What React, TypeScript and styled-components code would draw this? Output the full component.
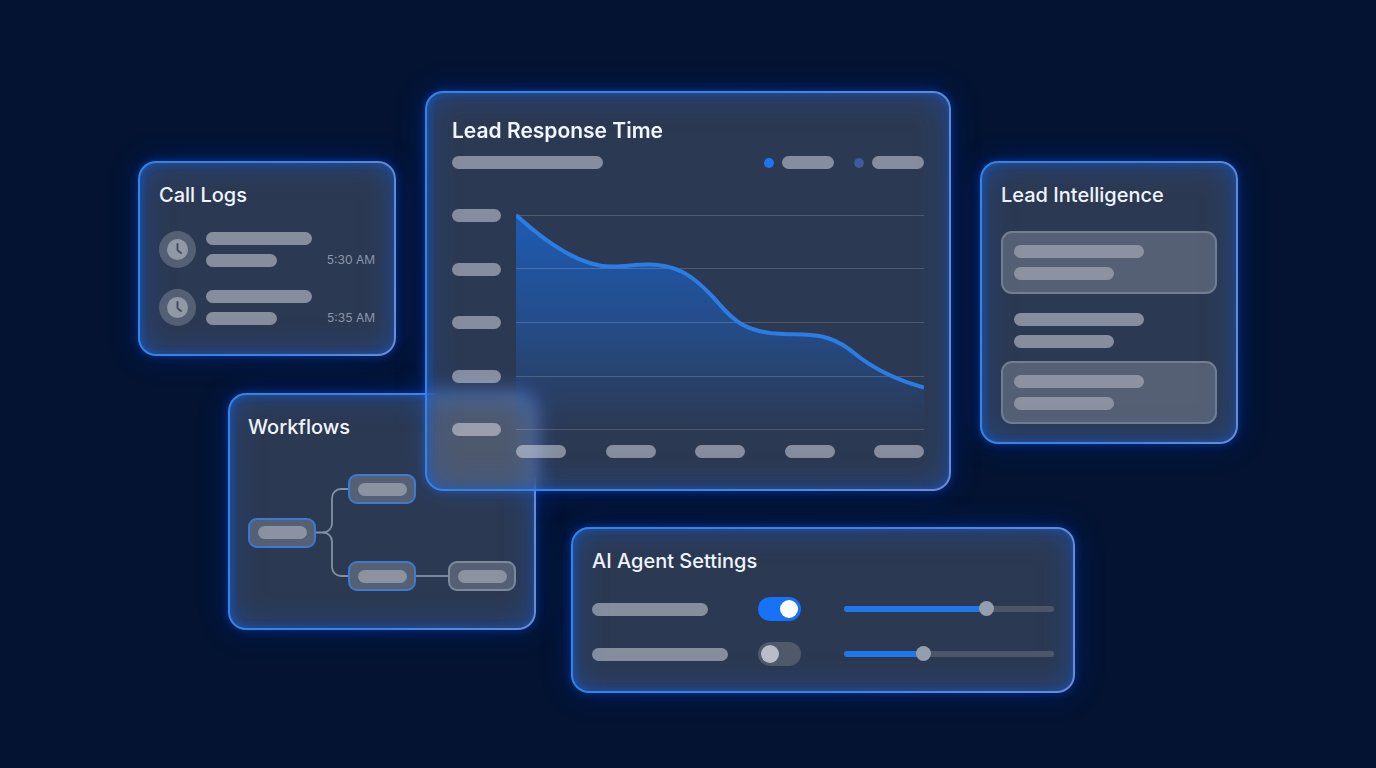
import React from 'react';
import styled, { createGlobalStyle, css } from 'styled-components';

const GlobalStyle = createGlobalStyle`
  *, *::before, *::after { box-sizing: border-box; }
  body {
    margin: 0;
    background: #031331;
    color: #f1f6ff;
    font-family: Inter, "Liberation Sans", sans-serif;
  }
`;

const Page = styled.main`
  min-height: 100vh;
  display: flex;
  align-items: center;
  justify-content: center;
  padding: 16px 24px 0;
  background: #031331;
`;

const Stage = styled.div`
  isolation: isolate;
  width: 100%;
  max-width: 1100px;
  display: grid;
  grid-template-columns: 258fr 526fr 258fr;
  column-gap: 29px;
  align-items: start;
`;

const Column = styled.div<{ $drop?: boolean; $gap: number }>`
  display: flex;
  flex-direction: column;
  gap: ${(p) => p.$gap}px;
  padding-top: ${(p) => (p.$drop ? 70 : 0)}px;
`;

const outerGlow = css`
  box-shadow:
    0 0 8px rgba(0, 84, 240, 0.45),
    0 0 30px rgba(0, 60, 200, 0.3);
`;

const Card = styled.section<{ $raised?: boolean }>`
  position: relative;
  z-index: ${(p) => (p.$raised ? 2 : 1)};
  padding: 20px 21px;
  border-radius: 18px;
  background: rgba(255, 255, 255, 0.165);

  /* inner light, stronger towards the left edge */
  &::after {
    content: '';
    position: absolute;
    inset: 0;
    border-radius: inherit;
    box-shadow:
      inset 3px 0 10px rgba(12, 104, 240, 0.35),
      inset 0 0 10px rgba(20, 96, 220, 0.5),
      inset 0 0 32px rgba(24, 96, 215, 0.5);
    pointer-events: none;
  }

  /* gradient outline */
  &::before {
    content: '';
    position: absolute;
    inset: 0;
    z-index: 1;
    padding: 2px;
    border-radius: inherit;
    background: linear-gradient(100deg, #2f85e6 0%, #3f82e0 55%, #6f8bd0 100%);
    mask: linear-gradient(#000 0 0) content-box exclude, linear-gradient(#000 0 0);
    pointer-events: none;
  }
`;

const LogsCard = styled(Card)`
  padding-bottom: 30px;
  ${outerGlow}
`;

const WorkflowCard = styled(Card)`
  margin: 0 -140px 0 90px;
  padding: 20px 20px 39px;
  ${outerGlow}
`;

const LeadCard = styled(Card)`
  ${outerGlow}
`;

const SettingsCard = styled(Card)`
  margin: 0 -124px 0 146px;
  padding-bottom: 27px;
  ${outerGlow}
`;

/* Keeps the chart's outer glow beneath the workflow card it overlaps. */
const ChartSlot = styled.div`
  position: relative;

  &::before {
    content: '';
    position: absolute;
    inset: 0;
    border-radius: 18px;
    ${outerGlow}
  }
`;

const ChartCard = styled(Card)`
  padding: 26px 27px 33px;
  backdrop-filter: blur(8px);
`;

const Title = styled.h2<{ $large?: boolean }>`
  margin: 0;
  font-size: ${(p) => (p.$large ? 21 : 20)}px;
  font-weight: ${(p) => (p.$large ? 600 : 500)};
  line-height: 28px;
  white-space: nowrap;
`;

const Bar = styled.span<{ $w: number; $soft?: boolean }>`
  display: block;
  flex: none;
  width: ${(p) => p.$w}px;
  max-width: 100%;
  height: 13px;
  border-radius: 7px;
  background: rgba(250, 250, 255, ${(p) => (p.$soft ? 0.33 : 0.44)});
`;

const BarPair = styled.div`
  display: flex;
  flex-direction: column;
  gap: 9px;
`;

/* Call logs */

const LogList = styled.ul`
  list-style: none;
  margin: 22px 0 0;
  padding: 0;
  display: flex;
  flex-direction: column;
  gap: 21px;
`;

const LogRow = styled.li`
  display: flex;
  align-items: center;
  gap: 10px;
`;

const ClockBadge = styled.span`
  flex: none;
  display: grid;
  place-items: center;
  width: 37px;
  height: 37px;
  border-radius: 50%;
  background: rgba(255, 255, 255, 0.2);
`;

const LogTime = styled.time`
  margin-left: auto;
  align-self: flex-end;
  color: #8d97ab;
  font-size: 12px;
  line-height: 16px;
  white-space: nowrap;
`;

const ClockIcon = () => (
  <svg width="21" height="21" viewBox="0 0 21 21" aria-hidden="true">
    <circle cx="10.5" cy="10.5" r="10.5" fill="#9299a6" />
    <path
      d="M10.5 5V10.4Q10.5 11.2 11.1 11.8L14 14.1"
      fill="none"
      stroke="#414c61"
      strokeWidth="1.9"
      strokeLinecap="round"
      strokeLinejoin="round"
    />
  </svg>
);

/* Workflow diagram */

const Diagram = styled.div`
  display: grid;
  grid-template-columns: 68px 1fr 68px 1fr 68px;
  grid-template-rows: 30px 30px;
  row-gap: 57px;
  margin-top: 33px;
`;

const Node = styled.div<{ $col: number; $row: string; $muted?: boolean }>`
  grid-column: ${(p) => p.$col};
  grid-row: ${(p) => p.$row};
  align-self: center;
  display: grid;
  place-items: center;
  height: 30px;
  border: 2px solid ${(p) => (p.$muted ? '#7f899a' : '#3c7bd0')};
  border-radius: 9px;
  background: rgba(255, 255, 255, 0.2);
`;

const Connector = styled.svg<{ $col: number; $row: string }>`
  grid-column: ${(p) => p.$col};
  grid-row: ${(p) => p.$row};
  display: block;
  width: 100%;
  height: 100%;
  fill: none;
  stroke: #8590a4;
  stroke-width: 1.8;
`;

/* Response time chart */

const ChartHeader = styled.div`
  display: flex;
  align-items: center;
  justify-content: space-between;
  margin-top: 11px;
`;

const Legend = styled.div`
  display: flex;
  gap: 20px;
`;

const LegendItem = styled.div`
  display: flex;
  align-items: center;
  gap: 8px;
`;

const Dot = styled.span<{ $color: string }>`
  width: 10px;
  height: 10px;
  border-radius: 50%;
  background: ${(p) => p.$color};
`;

const ChartGrid = styled.div`
  display: grid;
  grid-template-columns: 49px 1fr;
  gap: 9px 15px;
  margin-top: 40px;
`;

const YAxis = styled.div`
  display: flex;
  flex-direction: column;
  justify-content: space-between;
`;

const XAxis = styled.div`
  grid-column: 2;
  display: flex;
  justify-content: space-between;
`;

const Plot = styled.svg`
  display: block;
  width: 100%;
  height: 227px;
`;

const curve =
  'M0 6C24 28 60 57 94 57.5C108 58 118 55.5 133 55.5C162 55.5 178 68 196 87' +
  'C212 104 222 124 267 125C290 126 312 122 338 144C360 162 384 172 408 178.5';

const gridLines = [6.5, 59.5, 113.5, 167.5, 220.5];

/* Lead intelligence */

const LeadList = styled.ul`
  list-style: none;
  margin: 22px 0 0;
  padding: 0;
`;

const LeadItem = styled.li<{ $boxed?: boolean }>`
  ${(p) =>
    p.$boxed
      ? css`
          padding: 12px 11px;
          border: 2px solid #757e8e;
          border-radius: 11px;
          background: rgba(255, 255, 255, 0.2);
        `
      : css`
          padding: 19px 13px 13px;
        `}
`;

/* Agent settings */

const SettingList = styled.div`
  display: flex;
  flex-direction: column;
  gap: 21px;
  margin-top: 22px;
`;

const SettingRow = styled.div`
  display: grid;
  grid-template-columns: 166px 86px 1fr;
  align-items: center;
`;

const Toggle = styled.input`
  appearance: none;
  position: relative;
  z-index: 1;
  display: flex;
  align-items: center;
  width: 43px;
  height: 24px;
  margin: 0;
  padding: 3px;
  border-radius: 12px;
  background: #50596a;
  cursor: pointer;

  &::before {
    content: '';
    width: 18px;
    height: 18px;
    border-radius: 50%;
    background: #b9bdc9;
  }

  &:checked {
    justify-content: flex-end;
    background: #1673f8;
  }

  &:checked::before {
    background: #ffffff;
  }
`;

const Slider = styled.input`
  appearance: none;
  position: relative;
  z-index: 1;
  width: 100%;
  height: 16px;
  margin: 0;
  background: transparent;
  cursor: pointer;

  &::-webkit-slider-runnable-track {
    height: 6px;
    border-radius: 3px;
    background: linear-gradient(
      to right,
      #1f78ea var(--fill),
      #4c566b var(--fill)
    );
  }

  &::-webkit-slider-thumb {
    appearance: none;
    width: 15px;
    height: 15px;
    margin-top: -5px;
    border-radius: 50%;
    background: #959ead;
  }
`;

const RangeControl = ({ label, initial }: { label: string; initial: number }) => {
  const [value, setValue] = React.useState(initial);
  return (
    <Slider
      type="range"
      min={0}
      max={100}
      value={value}
      aria-label={label}
      onChange={(e) => setValue(Number(e.target.value))}
      style={{ '--fill': `${value}%` } as React.CSSProperties}
    />
  );
};

const logs = ['5:30 AM', '5:35 AM'];
const leads = [true, false, true];
const settings = [
  { name: 'First setting', bar: 116, on: true, level: 69 },
  { name: 'Second setting', bar: 136, on: false, level: 37 },
];

export default function App() {
  return (
    <>
      <GlobalStyle />
      <Page>
        <Stage>
          <Column $drop $gap={37}>
            <LogsCard>
              <Title>Call Logs</Title>
              <LogList>
                {logs.map((time) => (
                  <LogRow key={time}>
                    <ClockBadge>
                      <ClockIcon />
                    </ClockBadge>
                    <BarPair>
                      <Bar $w={106} />
                      <Bar $w={71} />
                    </BarPair>
                    <LogTime>{time}</LogTime>
                  </LogRow>
                ))}
              </LogList>
            </LogsCard>

            <WorkflowCard>
              <Title>Workflows</Title>
              <Diagram>
                <Node $col={1} $row="1 / 3">
                  <Bar $w={49} $soft />
                </Node>
                <Connector
                  $col={2}
                  $row="1 / 3"
                  viewBox="0 0 32 117"
                  preserveAspectRatio="none"
                  aria-hidden="true"
                >
                  <path d="M0 58.5H7A9 9 0 0 0 16 49.5V24A9 9 0 0 1 25 15H32" />
                  <path d="M7 58.5A9 9 0 0 1 16 67.5V93A9 9 0 0 0 25 102H32" />
                </Connector>
                <Node $col={3} $row="1">
                  <Bar $w={49} $soft />
                </Node>
                <Node $col={3} $row="2">
                  <Bar $w={49} $soft />
                </Node>
                <Connector
                  $col={4}
                  $row="2"
                  viewBox="0 0 32 30"
                  preserveAspectRatio="none"
                  aria-hidden="true"
                >
                  <path d="M0 15H32" />
                </Connector>
                <Node $col={5} $row="2" $muted>
                  <Bar $w={49} $soft />
                </Node>
              </Diagram>
            </WorkflowCard>
          </Column>

          <Column $gap={36}>
            <ChartSlot>
              <ChartCard $raised>
                <Title $large>Lead Response Time</Title>
                <ChartHeader>
                  <Bar $w={151} />
                  <Legend>
                    <LegendItem>
                      <Dot $color="#1f75f0" />
                      <Bar $w={52} />
                    </LegendItem>
                    <LegendItem>
                      <Dot $color="#3c5aa0" />
                      <Bar $w={52} />
                    </LegendItem>
                  </Legend>
                </ChartHeader>
                <ChartGrid>
                  <YAxis>
                    {gridLines.map((y) => (
                      <Bar key={y} $w={49} />
                    ))}
                  </YAxis>
                  <Plot
                    viewBox="0 0 408 227"
                    preserveAspectRatio="none"
                    role="img"
                    aria-label="Lead response time falling over the period"
                  >
                    <defs>
                      <linearGradient id="area" x1="0" y1="0" x2="0" y2="1">
                        <stop offset="0" stopColor="#1c62c4" stopOpacity="0.85" />
                        <stop offset="0.5" stopColor="#1e5cb8" stopOpacity="0.55" />
                        <stop offset="1" stopColor="#1e5cb8" stopOpacity="0" />
                      </linearGradient>
                    </defs>
                    <path d={`${curve}V220.5H0Z`} fill="url(#area)" />
                    {gridLines.map((y) => (
                      <line
                        key={y}
                        x1="0"
                        x2="408"
                        y1={y}
                        y2={y}
                        stroke="#ffffff"
                        strokeOpacity="0.17"
                      />
                    ))}
                    <path d={curve} fill="none" stroke="#2b7de6" strokeWidth="4" />
                  </Plot>
                  <XAxis>
                    {gridLines.map((y) => (
                      <Bar key={y} $w={50} />
                    ))}
                  </XAxis>
                </ChartGrid>
              </ChartCard>
            </ChartSlot>

            <SettingsCard>
              <Title>AI Agent Settings</Title>
              <SettingList>
                {settings.map((s) => (
                  <SettingRow key={s.name}>
                    <Bar $w={s.bar} />
                    <Toggle
                      type="checkbox"
                      defaultChecked={s.on}
                      aria-label={`${s.name} enabled`}
                    />
                    <RangeControl label={`${s.name} level`} initial={s.level} />
                  </SettingRow>
                ))}
              </SettingList>
            </SettingsCard>
          </Column>

          <Column $drop $gap={36}>
            <LeadCard>
              <Title>Lead Intelligence</Title>
              <LeadList>
                {leads.map((boxed, i) => (
                  <LeadItem key={i} $boxed={boxed}>
                    <BarPair>
                      <Bar $w={130} $soft={boxed} />
                      <Bar $w={100} $soft={boxed} />
                    </BarPair>
                  </LeadItem>
                ))}
              </LeadList>
            </LeadCard>
          </Column>
        </Stage>
      </Page>
    </>
  );
}
